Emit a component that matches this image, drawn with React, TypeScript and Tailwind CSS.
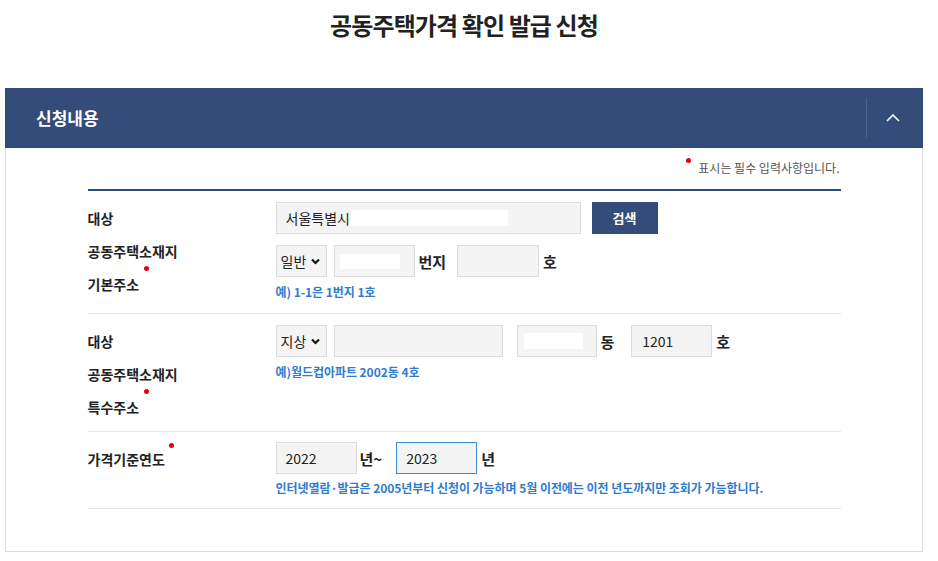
import React from "react";

const Dot = ({ className = "" }: { className?: string }) => (
  <span className={"absolute block h-[5px] w-[5px] rounded-full bg-[#e8000b] " + className} />
);

const Box = ({ w, children, blue = false }: { w: string; children?: React.ReactNode; blue?: boolean }) => (
  <div
    className={
      "flex h-[32px] items-center bg-[#f4f4f4] border text-[14px] text-[#222] " +
      (blue ? "border-[#3b8ed3] " : "border-[#dcdcdc] ") +
      w
    }
  >
    {children}
  </div>
);

const Sel = ({ label }: { label: string }) => (
  <div className="flex h-[32px] w-[51px] items-center gap-[5px] border border-[#dcdcdc] bg-[#f4f4f4] pl-[4px] text-[14px] text-[#222]">
    <span>{label}</span>
    <svg width="9" height="7" viewBox="0 0 9 7" className="mt-[1px]">
      <polyline points="1,1.5 4.5,5 8,1.5" fill="none" stroke="#111" strokeWidth="2.2" />
    </svg>
  </div>
);

const Unit = ({ children }: { children: React.ReactNode }) => (
  <span className="text-[15px] font-bold text-[#222]">{children}</span>
);

const Hint = ({ children, mt }: { children: React.ReactNode; mt: string }) => (
  <div className={"h-[18px] leading-[18px] text-[12px] font-bold text-[#2f7bcf] tracking-[-0.05px] " + mt}>{children}</div>
);

export default function App() {
  return (
    <div className="min-h-[561px] w-[938px] bg-white font-['Noto_Sans_CJK_KR','Noto_Sans',sans-serif]">
      <div className="ml-[5px] h-[88px] w-[918px] pt-[8px] text-center">
        <h1 className="text-[24px] leading-[34px] font-bold text-[#222] tracking-[-0.9px]">공동주택가격 확인 발급 신청</h1>
      </div>

      <div className="ml-[5px] w-[918px]">
        <div className="flex h-[60px] items-center bg-[#344c79]">
          <div className="flex-1 pl-[31px] text-[17px] font-bold text-white">신청내용</div>
          <div className="h-[40px] w-px bg-[#4a6291]" />
          <div className="flex w-[56px] items-center justify-center pr-[4px]">
            <svg width="14" height="8" viewBox="0 0 14 8">
              <polyline points="1,7 7,1 13,7" fill="none" stroke="#fff" strokeWidth="1.6" />
            </svg>
          </div>
        </div>

        <div className="border-x border-b border-[#dcdcdc] pt-[10px] pb-[42px]">
          <div className="mx-auto w-[753px]">
            <div className="flex h-[20px] items-center justify-end pr-px">
              <span className="relative pl-[12px] text-[12px] text-[#555]">
                <Dot className="left-0 top-[-1px] h-[4px] w-[4px]" />
                표시는 필수 입력사항입니다.
              </span>
            </div>
            <div className="mt-[11px] h-[2px] bg-[#2c4a7c]" />

            {/* Row 1 */}
            <div className="flex border-b border-[#e6e6e6] pt-[11px] pb-[12px]">
              <div className="w-[188px] text-[14px] leading-[33px] font-bold text-[#222]">
                <div>대상</div>
                <div>공동주택소재지</div>
                <div className="relative inline-block">
                  기본주소
                  <Dot className="right-[-10px] top-[-2px]" />
                </div>
              </div>
              <div className="flex flex-col">
                <div className="flex items-center">
                  <Box w="w-[305px] pl-[9px]">
                    <span>서울특별시</span>
                    <span className="ml-[1px] block h-[16px] w-[157px] bg-white" />
                  </Box>
                  <button className="ml-[11px] h-[32px] w-[66px] bg-[#344c79] text-[13px] font-bold text-white">검색</button>
                </div>
                <div className="mt-[11px] flex items-center">
                  <Sel label="일반" />
                  <div className="ml-[7px]">
                    <Box w="w-[81px] pl-[5px]">
                      <span className="block h-[15px] w-[60px] bg-white" />
                    </Box>
                  </div>
                  <span className="ml-[4px]"><Unit>번지</Unit></span>
                  <div className="ml-[11px]">
                    <Box w="w-[82px]" />
                  </div>
                  <span className="ml-[4px]"><Unit>호</Unit></span>
                </div>
                <Hint mt="mt-[6px]">예) 1-1은 1번지 1호</Hint>
              </div>
            </div>

            {/* Row 2 */}
            <div className="flex border-b border-[#e6e6e6] pt-[11px] pb-[7px]">
              <div className="w-[188px] text-[14px] leading-[33px] font-bold text-[#222]">
                <div>대상</div>
                <div>공동주택소재지</div>
                <div className="relative inline-block">
                  특수주소
                  <Dot className="right-[-10px] top-[-2px]" />
                </div>
              </div>
              <div className="flex flex-col">
                <div className="flex items-center">
                  <Sel label="지상" />
                  <div className="ml-[7px]">
                    <Box w="w-[169px]" />
                  </div>
                  <div className="ml-[14px]">
                    <Box w="w-[80px] pl-[6px]">
                      <span className="block h-[16px] w-[59px] bg-white" />
                    </Box>
                  </div>
                  <span className="ml-[4px]"><Unit>동</Unit></span>
                  <div className="ml-[17px]">
                    <Box w="w-[81px] pl-[10px]">1201</Box>
                  </div>
                  <span className="ml-[4px]"><Unit>호</Unit></span>
                </div>
                <Hint mt="mt-[6px]">예)월드컵아파트 2002동 4호</Hint>
              </div>
            </div>

            {/* Row 3 */}
            <div className="flex border-b border-[#e6e6e6] pt-[10px] pb-[11px]">
              <div className="w-[188px] pt-px text-[14px] leading-[33px] font-bold text-[#222]">
                <div className="relative inline-block">
                  가격기준연도
                  <Dot className="right-[-9px] top-[0px]" />
                </div>
              </div>
              <div className="flex flex-col">
                <div className="flex items-center">
                  <Box w="w-[81px] pl-[9px]">2022</Box>
                  <span className="ml-[3px]"><Unit>년~</Unit></span>
                  <div className="ml-[14px]">
                    <Box w="w-[81px] pl-[9px]" blue>2023</Box>
                  </div>
                  <span className="ml-[4px]"><Unit>년</Unit></span>
                </div>
                <Hint mt="mt-[5px]">인터넷열람·발급은 2005년부터 신청이 가능하며 5월 이전에는 이전 년도까지만 조회가 가능합니다.</Hint>
              </div>
            </div>
          </div>
        </div>
      </div>
    </div>
  );
}
